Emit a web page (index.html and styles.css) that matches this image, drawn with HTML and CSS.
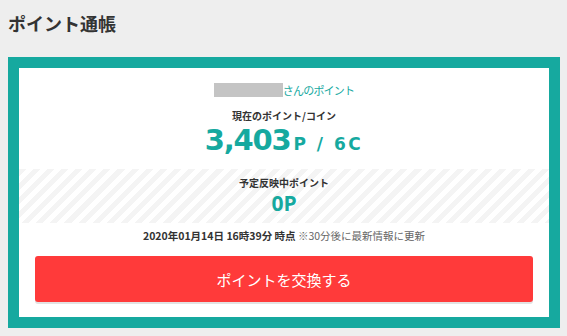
FILE: index.html
```html
<!DOCTYPE html>
<html lang="ja">
<head>
<meta charset="utf-8">
<link rel="stylesheet" href="styles.css">
</head>
<body>
<h1 class="title">ポイント通帳</h1>
<section class="passbook">
  <div class="inner">
    <p class="owner"><span class="masked"></span>さんのポイント</p>
    <p class="label">現在のポイント/コイン</p>
    <p class="total"><span class="big">3,403</span><span class="unit">P / 6C</span></p>
    <div class="pending">
      <p class="label">予定反映中ポイント</p>
      <p class="pending-value">0P</p>
    </div>
    <p class="updated"><b>2020年01月14日 16時39分 時点</b> ※30分後に最新情報に更新</p>
    <a class="exchange" href="#">ポイントを交換する</a>
  </div>
</section>
</body>
</html>
```
FILE: styles.css
```css
* { box-sizing: border-box; }
html, body { margin: 0; padding: 0; }
body {
  background: #eeeeee;
  font-family: "Noto Sans CJK JP", "Noto Sans", sans-serif;
  color: #333;
  padding: 0 7px 0 8px;
}
p { margin: 0; }
.title {
  margin: 0;
  padding-top: 11px;
  height: 57px;
  font-size: 18px;
  line-height: 24px;
  font-weight: 700;
  color: #333;
}
.passbook {
  width: 552px;
  border: 11px solid #16a99f;
  background: #fff;
}
.inner {
  display: flex;
  flex-direction: column;
  align-items: center;
  padding: 14px 0 15px;
}
.owner {
  display: flex;
  align-items: center;
  font-size: 11px;
  line-height: 16px;
  letter-spacing: -0.8px;
  color: #16a99f;
  height: 16px;
}
.masked {
  display: inline-block;
  width: 69px;
  height: 14px;
  background: #c4c4c4;
}
.label {
  font-size: 10px;
  line-height: 14px;
  font-weight: 700;
  color: #333;
  margin-top: 11px;
}
.total {
  color: #16a99f;
  font-family: "DejaVu Sans", sans-serif;
  font-weight: 700;
  line-height: 30px;
  height: 30px;
  display: flex;
  align-items: baseline;
  margin-top: 2px;
}
.big {
  font-size: 29px;
  letter-spacing: -1.2px;
}
.unit {
  font-size: 17px;
  margin-left: 3px;
  letter-spacing: 2.5px;
}
.pending {
  align-self: stretch;
  margin-top: 14px;
  height: 54px;
  display: flex;
  flex-direction: column;
  align-items: center;
  background: repeating-linear-gradient(135deg, #f4f4f4 0 5px, #ffffff 5px 10px);
}
.pending .label { margin-top: 7px; }
.pending-value {
  font-family: "Open Sans", "Noto Sans", sans-serif;
  font-weight: 700;
  font-size: 21px;
  line-height: 26px;
  color: #16a99f;
}
.updated {
  margin-top: 6px;
  font-size: 10.5px;
  line-height: 14px;
  color: #666;
}
.updated b { color: #333; font-weight: 700; }
.exchange {
  margin-top: 13px;
  width: 498px;
  height: 46px;
  background: #ff3a3a;
  border-radius: 3px;
  box-shadow: 0 2px 0 #e2e2e2;
  color: #fff;
  text-decoration: none;
  font-size: 15px;
  display: flex;
  align-items: center;
  justify-content: center;
}
```
